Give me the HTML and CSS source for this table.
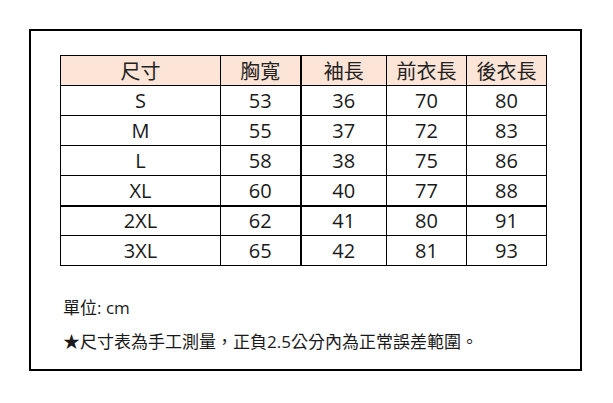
FILE: index.html
```html
<!DOCTYPE html>
<html lang="zh-Hant">
<head>
<meta charset="utf-8">
<title>尺寸表</title>
<link rel="stylesheet" href="styles.css">
</head>
<body>
<div class="frame">
  <table class="size-table">
    <colgroup>
      <col class="c-size"><col class="c-a"><col class="c-b"><col class="c-c"><col class="c-d">
    </colgroup>
    <thead>
      <tr><th class="sep">尺寸</th><th class="sep-thick">胸寬</th><th>袖長</th><th>前衣長</th><th>後衣長</th></tr>
    </thead>
    <tbody>
      <tr><td>S</td><td class="sep-thick">53</td><td>36</td><td>70</td><td>80</td></tr>
      <tr><td>M</td><td class="sep-thick">55</td><td>37</td><td>72</td><td>83</td></tr>
      <tr><td>L</td><td class="sep-thick">58</td><td>38</td><td>75</td><td>86</td></tr>
      <tr class="row-break"><td>XL</td><td class="sep-thick">60</td><td>40</td><td>77</td><td>88</td></tr>
      <tr class="row-short"><td>2XL</td><td class="sep-thick">62</td><td>41</td><td>80</td><td>91</td></tr>
      <tr><td>3XL</td><td class="sep-thick">65</td><td>42</td><td>81</td><td>93</td></tr>
    </tbody>
  </table>
  <div class="notes">
    <p><span class="unit-label">單位:</span> cm</p>
    <p>★尺寸表為手工測量，正負2.5公分內為正常誤差範圍。</p>
  </div>
</div>
</body>
</html>
```

FILE: styles.css
```css
html, body {
  margin: 0;
  padding: 0;
  background: #ffffff;
}

body {
  font-family: "Open Sans", "Noto Sans CJK TC", sans-serif;
  color: #1a1a1a;
}

.frame {
  margin: 29px 0 0 29px;
  width: 549px;
  height: 338px;
  border: 2px solid #000;
  padding: 0;
  box-sizing: content-box;
}

.size-table {
  margin: 24px 0 0 29px;
  border-collapse: collapse;
  table-layout: fixed;
  width: 486px;
  font-size: 20px;
}

.c-size { width: 160px; }
.c-a { width: 80px; }
.c-b { width: 86px; }
.c-c { width: 80px; }
.c-d { width: 80px; }

.size-table th,
.size-table td {
  border: 1px solid #000;
  height: 29px;
  padding: 0;
  text-align: center;
  vertical-align: middle;
  line-height: 20px;
  font-weight: normal;
}

.size-table th {
  background: #fce4d6;
  font-family: "Noto Sans CJK TC", sans-serif;
  color: #222;
}

.size-table .sep-thick {
  border-right: 2px solid #000;
}

.row-break td {
  border-bottom: 2px solid #000;
}

.row-short td {
  height: 28px;
}

.notes {
  margin: 25px 0 0 32px;
  font-size: 17px;
  line-height: 34px;
  color: #1a1a1a;
}

.notes p {
  margin: 0;
}
```
